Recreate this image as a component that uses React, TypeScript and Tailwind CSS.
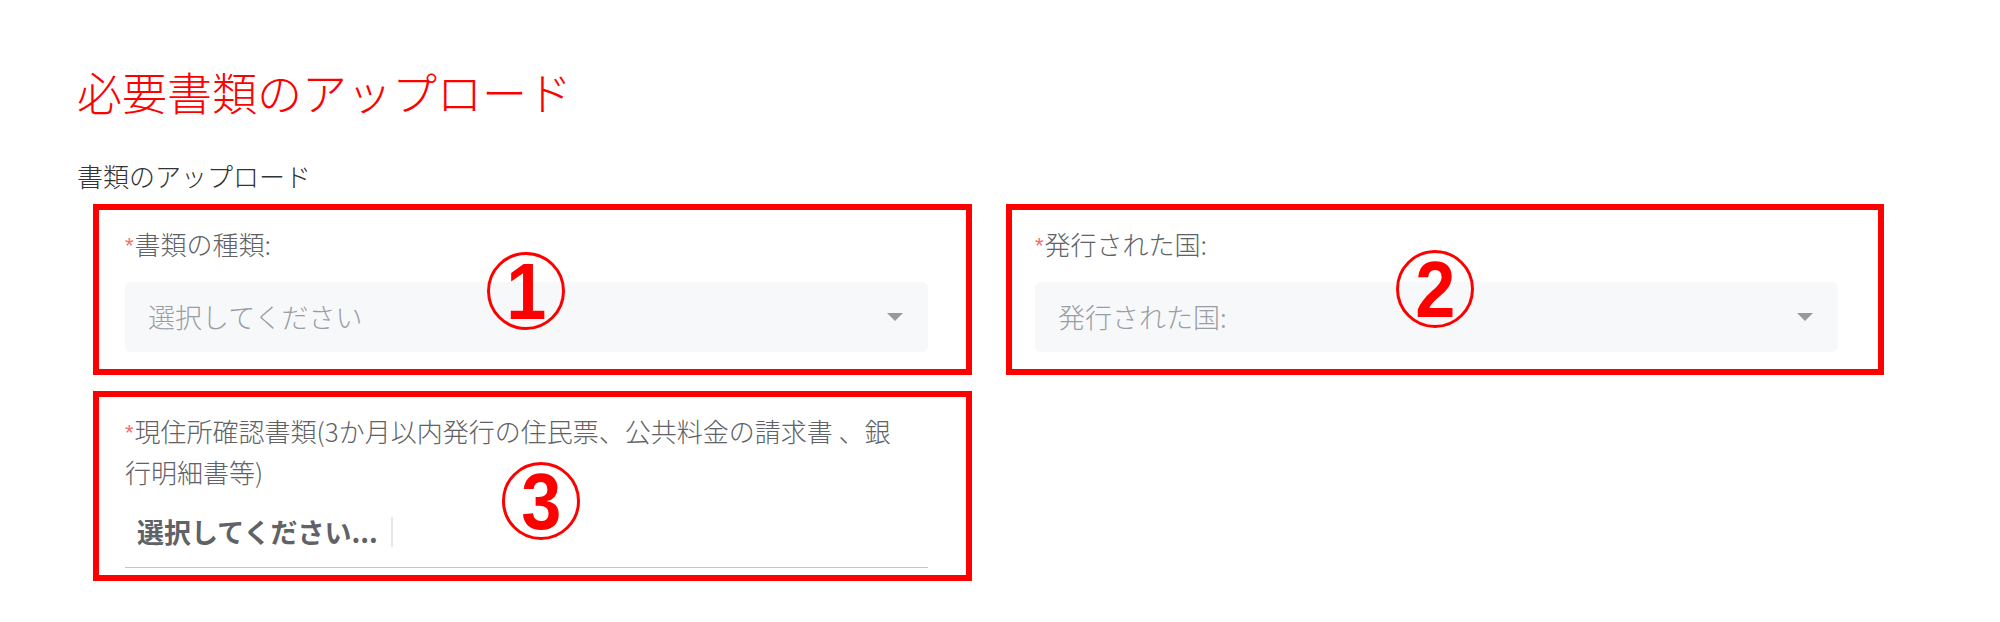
import React from 'react';

const FONT = "font-['Noto_Sans_CJK_JP','Noto_Sans_CJK_SC',sans-serif]";

const Caret = () => (
  <svg width="16" height="8" viewBox="0 0 16 8" className="shrink-0">
    <polygon points="0,0 16,0 8,8" fill="#999999" />
  </svg>
);

const Marker = ({ n, className }: { n: string; className: string }) => (
  <div
    className={`absolute w-[78px] h-[78px] rounded-full border-[3px] border-[#ff0000] flex items-center justify-center ${className}`}
  >
    <span className="font-['Liberation_Sans',Arial,sans-serif] font-bold text-[80px] leading-none text-[#ff0000] mt-[2px] scale-x-[0.9]">
      {n}
    </span>
  </div>
);

const Required = () => (
  <span className="font-['Liberation_Sans',Arial,sans-serif] text-[#f56c6c] text-[22px] leading-none font-normal mr-[1px] relative -top-[2px]">*</span>
);

const SelectField = ({ label, placeholder }: { label: string; placeholder: string }) => (
  <div className="w-[803px]">
    <div className="h-[40px] leading-[40px] text-[26px] font-light text-[#606266] whitespace-nowrap">
      <Required />
      {label}
    </div>
    <div className="mt-[18px] h-[70px] rounded-[6px] bg-[#f7f8fa] flex items-center justify-between pl-[23px] pr-[25px]">
      <span className="text-[27px] font-light text-[#9a9da4]">{placeholder}</span>
      <Caret />
    </div>
  </div>
);

export default function App() {
  return (
    <div className={`relative w-[2000px] h-[622px] bg-white ${FONT}`}>
      <div className="pl-[77px] pt-[62px]">
        <h1 className="h-[60px] leading-[60px] text-[45px] text-[#ff0000] font-light whitespace-nowrap">
          必要書類のアップロード
        </h1>
        <p className="mt-[36px] h-[36px] leading-[36px] text-[26px] font-light text-[#333333]">書類のアップロード</p>

        <div className="ml-[16px] mt-[10px] grid grid-cols-[879px_878px] gap-x-[34px] gap-y-[16px]">
          <div className="h-[171px] border-[6px] border-[#ff0000] pl-[26px] pt-[14px]">
            <SelectField label="書類の種類:" placeholder="選択してください" />
          </div>
          <div className="h-[171px] border-[6px] border-[#ff0000] pl-[23px] pt-[14px]">
            <SelectField label="発行された国:" placeholder="発行された国:" />
          </div>
          <div className="h-[190px] border-[6px] border-[#ff0000] pl-[26px] pt-[13px]">
            <div className="w-[803px]">
              <div className="w-[785px] h-[82px] leading-[41px] text-[26px] font-light text-[#606266]">
                <Required />
                現住所確認書類(3か月以内発行の住民票、公共料金の請求書 、銀行明細書等)
              </div>
              <div className="h-[76px] border-b border-[#c0c4cc] flex items-center pt-[5px] pl-[12px]">
                <span className="text-[27px] font-bold text-[#606266]">選択してください...</span>
                <span className="ml-[13px] w-[2px] h-[30px] bg-[#e4e7ed]" />
              </div>
            </div>
          </div>
        </div>
      </div>

      <Marker n="1" className="left-[487px] top-[252px]" />
      <Marker n="2" className="left-[1396px] top-[250px]" />
      <Marker n="3" className="left-[502px] top-[462px]" />
    </div>
  );
}
